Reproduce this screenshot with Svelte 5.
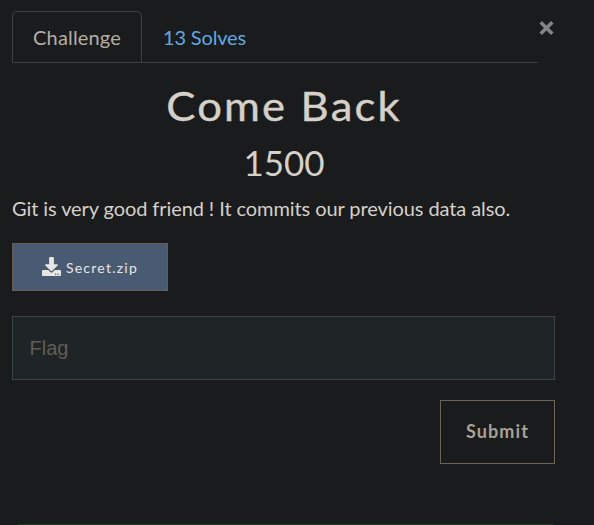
<script>
  let active = $state('challenge');
  let flag = $state('');
</script>

<main class="dialog">
  <header>
    <nav>
      <button class="tab" class:active={active === 'challenge'} onclick={() => (active = 'challenge')}>Challenge</button>
      <button class="tab solves" class:active={active === 'solves'} onclick={() => (active = 'solves')}>13 Solves</button>
    </nav>
    <button class="close" aria-label="Close">
      <svg width="15" height="14" viewBox="0 0 15 14"><path d="M1.7 1.3 13.3 12.7M13.3 1.3 1.7 12.7" /></svg>
    </button>
  </header>

  <h2>Come Back</h2>
  <h3>1500</h3>
  <p>Git is very good friend ! It commits our previous data also.</p>

  <button class="file">
    <svg width="19" height="19" viewBox="0 0 512 512"><path d="M216 0h80c13.300 0 24 10.700 24 24v168h87.700c17.800 0 26.700 21.500 14.100 34.100L269.700 378.300c-7.500 7.500-19.800 7.500-27.300 0L90.100 226.100c-12.600-12.600-3.700-34.100 14.100-34.100H192V24c0-13.300 10.700-24 24-24zm296 376v112c0 13.300-10.700 24-24 24H24c-13.300 0-24-10.700-24-24V376c0-13.300 10.700-24 24-24h146.700l49 49c20.100 20.100 52.500 20.100 72.600 0l49-49H488c13.300 0 24 10.700 24 24zm-124 88c0-11-9-20-20-20s-20 9-20 20 9 20 20 20 20-9 20-20zm64 0c0-11-9-20-20-20s-20 9-20 20 9 20 20 20 20-9 20-20z" /></svg>
    <span>Secret.zip</span>
  </button>

  <input placeholder="Flag" aria-label="Flag" bind:value={flag} />
  <button class="submit">Submit</button>
  <div class="edge"></div>
</main>

<style>
  :global(body) { margin: 0; background: #191b1c; }
  .dialog {
    box-sizing: border-box;
    height: 525px;
    padding: 11px 39px 0 12px;
    display: flex;
    flex-direction: column;
    position: relative;
    background: #191b1c;
    color: #d5d0c8;
    font-family: Lato, sans-serif;
  }
  button { margin: 0; padding: 0; border: 0; background: none; font-family: inherit; cursor: pointer; }
  header { display: flex; height: 52px; }
  nav { box-sizing: border-box; display: flex; width: 526px; height: 52px; border-bottom: 1px solid #3d4042; }
  .tab {
    box-sizing: border-box;
    height: 52px;
    width: 130px;
    border: 1px solid transparent;
    border-radius: 5px 5px 0 0;
    font-size: 20px;
    line-height: 30px;
    letter-spacing: 0.15px;
    color: #60a8e2;
  }
  .tab.active { color: #b5aea3; border-color: #3d4042; }
  .solves { width: 125px; letter-spacing: -0.15px; }
  .close { width: 15px; height: 14px; margin: 10px 0 0 1px; flex: none; }
  svg { display: block; flex: none; }
  .close path { stroke: #858585; stroke-width: 3.6; fill: none; }
  h2 { margin: 19px 0 0; padding-left: 1px; text-align: center; font-size: 40px; line-height: 48px; font-weight: 400; letter-spacing: 2px; transform: scaleX(1.09); -webkit-text-stroke: 0.4px #d5d0c8; }
  h3 { margin: 8px 0 0; padding-left: 1px; text-align: center; font-size: 35px; line-height: 48px; font-weight: 400; }
  p { margin: 7px 0 0; font-size: 20px; line-height: 30px; letter-spacing: -0.085px; white-space: nowrap; }
  .file {
    box-sizing: border-box;
    width: 156px;
    height: 48px;
    margin-top: 20px;
    border: 1px solid #665e54;
    background: #495b73;
    color: #e8e6e3;
    display: flex;
    align-items: center;
    justify-content: center;
    gap: 5px;
    font-size: 14px;
    letter-spacing: 1.25px;
  }
  .file svg { fill: #e8e6e3; margin-top: -2px; }
  .file span { padding-top: 1px; }
  input {
    box-sizing: border-box;
    width: 543px;
    height: 64px;
    margin: 25px 0 0;
    padding: 0 16.5px;
    border: 1px solid #3d4446;
    border-radius: 0;
    background: #1f2426;
    color: #d5d0c8;
    font: 20px "Liberation Sans", Arial, sans-serif;
    outline: none;
  }
  input::placeholder { color: #605d57; opacity: 1; }
  .submit {
    box-sizing: border-box;
    align-self: flex-end;
    width: 115px;
    height: 64px;
    margin-top: 20px;
    padding-bottom: 2px;
    border: 1px solid #6d6357;
    color: #aaa196;
    font-size: 18px;
    font-weight: 700;
    letter-spacing: 1.1px;
  }
  .edge { position: absolute; left: 18px; right: 40px; bottom: 0; height: 1px; background: #233524; }
</style>
